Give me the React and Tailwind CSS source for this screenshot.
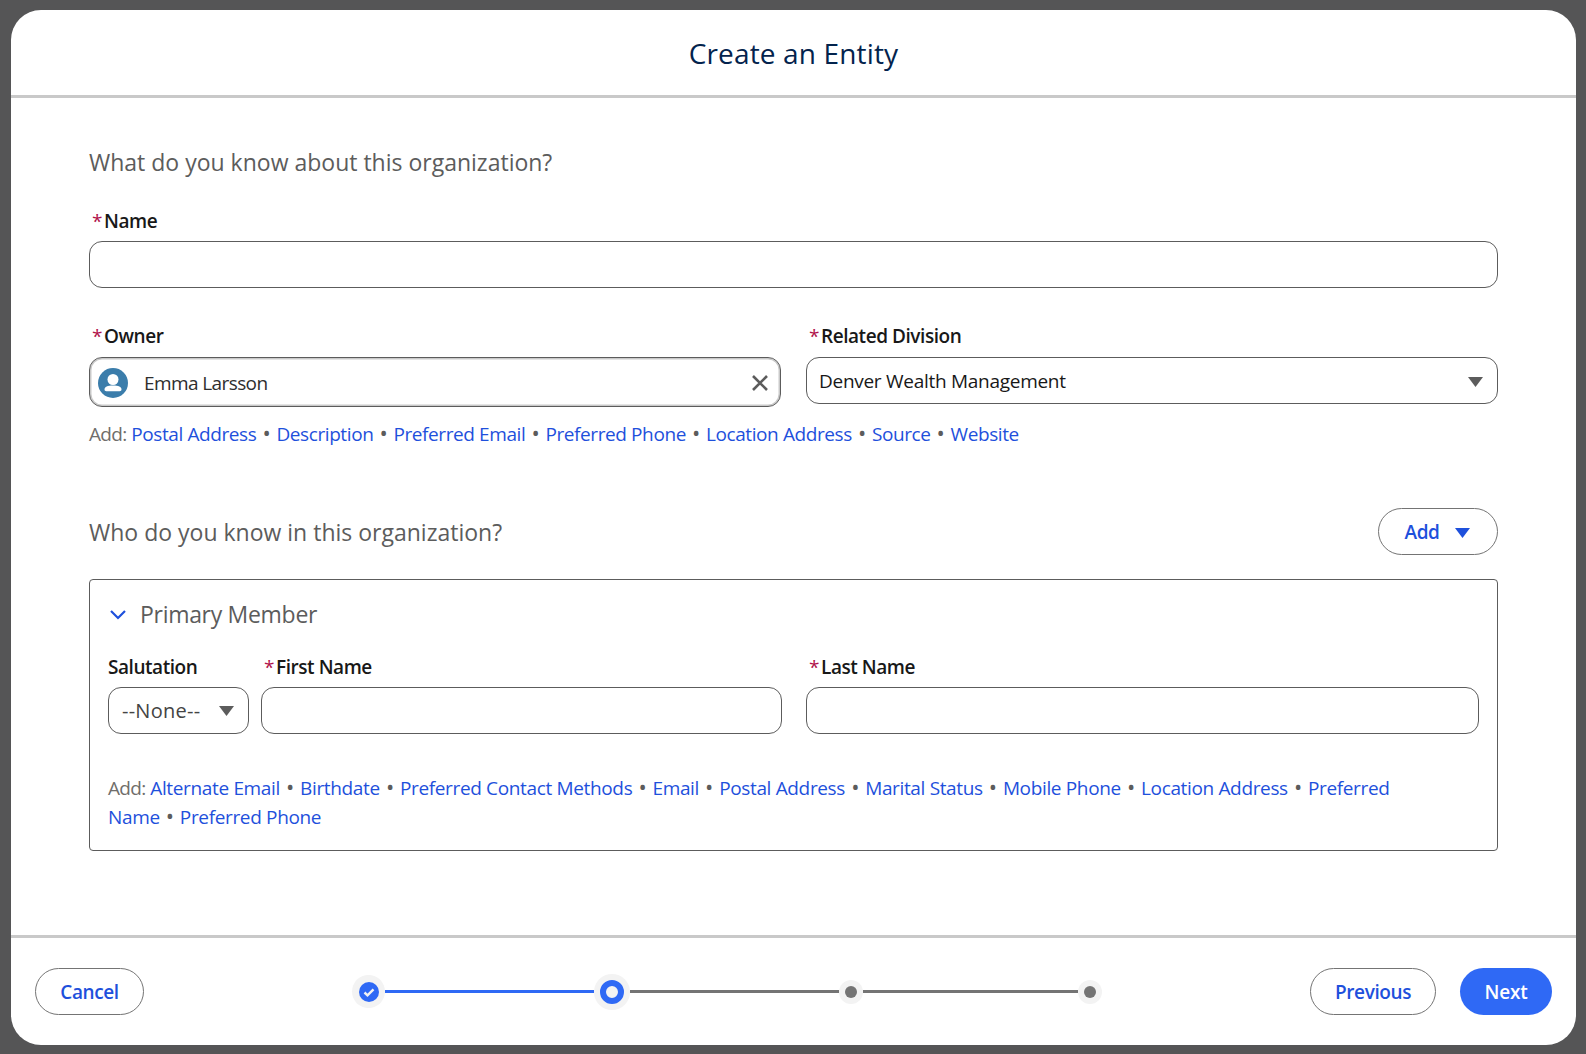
const font = { fontFamily: '"Open Sans", "Noto Sans", sans-serif' };

function Label({ children, required }) {
  return (
    <div className="flex items-center h-[26px] text-[19px] font-semibold text-[#181818] leading-none tracking-[-0.45px]">
      {required && <span className="text-[#b0124a] font-normal ml-[3px] mr-[2px] text-[19px]">*</span>}
      {children}
    </div>
  );
}

function Caret({ color = '#5c5c5c', className = 'mt-[1px]' }) {
  return (
    <svg width="15" height="10" viewBox="0 0 15 10" className={`shrink-0 ${className}`}>
      <path d="M0 0h15L7.500 10z" fill={color} />
    </svg>
  );
}

function AddLinks({ items, className = 'tracking-[-0.4px]' }) {
  return (
    <p className={`text-[19px] leading-[29px] text-[#706e6b] ${className}`}>
      <span className="tracking-[-0.65px]">Add:</span>{' '}
      {items.map((item, i) => (
        <span key={item} className="contents">
          {i > 0 && (
            <>
              {' '}
              <span className="text-[22px] leading-[0] text-[#5c5c5c] mx-[1.5px]">•</span>
              {' '}
            </>
          )}
          {item.split(' ').map((word, j) => (
            <span key={word} className="contents">
              {j > 0 && ' '}
              <a className="text-[#1e50dc]">{word}</a>
            </span>
          ))}
        </span>
      ))}
    </p>
  );
}

function PillButton({ children, className = '' }) {
  return (
    <button className={`h-[47px] rounded-full border border-[#747474] bg-white text-[#1e50dc] text-[19px] font-semibold tracking-[-0.4px] flex items-center justify-center ${className}`}>
      {children}
    </button>
  );
}

const Line = ({ w, color }) => <div className={`h-[3px] ${w} ${color}`} />;

function GrayStep() {
  return (
    <div className="w-[24px] h-[24px] rounded-full bg-[#f3f3f3] flex items-center justify-center shrink-0">
      <div className="w-[12px] h-[12px] rounded-full bg-[#747474]" />
    </div>
  );
}

export default function App() {
  return (
    <div className="h-[1054px] bg-[#555556] pt-[10px] pl-[11px] pr-[10px] pb-[9px]" style={font}>
      <div className="h-full bg-white rounded-[30px] flex flex-col overflow-hidden">
        {/* Header */}
        <header className="h-[88px] shrink-0 border-b-[3px] border-[#c9c9c9] flex items-center justify-center">
          <h1 className="text-[28px] text-[#03234d] tracking-[0.15px] mt-[1px]">Create an Entity</h1>
        </header>

        {/* Body */}
        <main className="flex-1 px-[78px] pt-[48px]">
          <h2 className="text-[23px] leading-[32px] text-[#5c5c5c]">What do you know about this organization?</h2>

          <div className="mt-[30px]">
            <Label required>Name</Label>
            <div className="mt-[7px] h-[47px] rounded-[13px] border border-[#5c5c5c]" />
          </div>

          <div className="mt-[35px] grid grid-cols-2 gap-x-[25px]">
            <div>
              <Label required>Owner</Label>
              <div className="mt-[8px] h-[50px] rounded-[13px] border border-[#5c5c5c] shadow-[inset_0_0_0_1.5px_#c9c9c9] flex items-center pt-[2px] pl-[8px] pr-[11px]">
                <svg width="30" height="30" viewBox="0 0 30 30" className="shrink-0">
                  <circle cx="15" cy="15" r="15" fill="#3b7dab" />
                  <circle cx="15" cy="11.500" r="5.500" fill="#fff" />
                  <path d="M6.500 21.500c0-2.600 3-4 8.500-4s8.500 1.400 8.500 4c0 1-.8 1.700-1.800 1.700H8.300c-1 0-1.800-.7-1.800-1.700z" fill="#fff" />
                </svg>
                <span className="ml-[16px] text-[19px] text-[#2e2e2e] tracking-[-0.6px]">Emma Larsson</span>
                <svg width="18" height="18" viewBox="0 0 18 18" className="ml-auto">
                  <path d="M2 2l14 14M16 2L2 16" stroke="#5c5c5c" strokeWidth="2.600" />
                </svg>
              </div>
            </div>
            <div>
              <Label required>Related Division</Label>
              <div className="mt-[8px] h-[47px] rounded-[13px] border border-[#5c5c5c] flex items-center justify-between pt-[2px] pl-[12px] pr-[14px]">
                <span className="text-[19px] text-[#181818] tracking-[-0.28px]">Denver Wealth Management</span>
                <Caret />
              </div>
            </div>
          </div>

          <div className="mt-[13px]">
            <AddLinks items={['Postal Address', 'Description', 'Preferred Email', 'Preferred Phone', 'Location Address', 'Source', 'Website']} />
          </div>

          <div className="mt-[59px] flex items-center justify-between">
            <h2 className="text-[23px] leading-[32px] text-[#5c5c5c]">Who do you know in this organization?</h2>
            <PillButton className="w-[120px] gap-[15px] pt-[1px] pr-[2px]">
              Add
              <Caret color="#1e50dc" className="mt-[2px]" />
            </PillButton>
          </div>

          <section className="mt-[24px] h-[272px] rounded-[4px] border border-[#5c5c5c] px-[18px]">
            <div className="h-[74px] flex items-center pb-[6px]">
              <svg width="18" height="12" viewBox="0 0 18 12" className="ml-[1px] mt-[2px]">
                <path d="M2 2l7 7 7-7" fill="none" stroke="#1e50dc" strokeWidth="2.200" />
              </svg>
              <span className="ml-[13px] text-[23px] text-[#5c5c5c] tracking-[-0.3px]">Primary Member</span>
            </div>
            <div className="flex">
              <div className="w-[141px] shrink-0">
                <Label>Salutation</Label>
                <div className="mt-[7px] h-[47px] rounded-[13px] border border-[#5c5c5c] flex items-center justify-between pl-[13px] pr-[14px]">
                  <span className="text-[20px] text-[#444] tracking-[0.25px]">--None--</span>
                  <Caret />
                </div>
              </div>
              <div className="w-[521px] ml-[12px] shrink-0">
                <Label required>First Name</Label>
                <div className="mt-[7px] h-[47px] rounded-[13px] border border-[#5c5c5c]" />
              </div>
              <div className="flex-1 ml-[24px]">
                <Label required>Last Name</Label>
                <div className="mt-[7px] h-[47px] rounded-[13px] border border-[#5c5c5c]" />
              </div>
            </div>
            <div className="mt-[40px] pr-[80px]">
              <AddLinks className="tracking-[-0.35px]" items={['Alternate Email', 'Birthdate', 'Preferred Contact Methods', 'Email', 'Postal Address', 'Marital Status', 'Mobile Phone', 'Location Address', 'Preferred Name', 'Preferred Phone']} />
            </div>
          </section>
        </main>

        {/* Footer */}
        <footer className="h-[110px] shrink-0 border-t-[3px] border-[#c9c9c9] flex items-center pl-[24px] pr-[24px]">
          <PillButton className="w-[109px] pt-[2px]">Cancel</PillButton>
          <div className="ml-[208px] flex items-center">
            <div className="w-[33px] h-[33px] rounded-full bg-[#f3f3f3] flex items-center justify-center shrink-0">
              <svg width="20" height="20" viewBox="0 0 20 20">
                <circle cx="10" cy="10" r="10" fill="#2f69f5" />
                <path d="M5.500 10.500l3 2.800 6-6" fill="none" stroke="#f3f3f3" strokeWidth="2.400" />
              </svg>
            </div>
            <Line w="w-[209px]" color="bg-[#2f69f5]" />
            <div className="w-[36px] h-[36px] rounded-full bg-[#f3f3f3] flex items-center justify-center shrink-0">
              <div className="w-[24px] h-[24px] rounded-full border-[6px] border-[#2f69f5] bg-[#f3f3f3]" />
            </div>
            <Line w="w-[209px]" color="bg-[#747474]" />
            <GrayStep />
            <Line w="w-[215px]" color="bg-[#747474]" />
            <GrayStep />
          </div>
          <div className="ml-auto flex items-center gap-[24px]">
            <PillButton className="w-[126px] pt-[2px]">Previous</PillButton>
            <button className="w-[92px] h-[47px] rounded-full bg-[#2f69f5] text-white text-[19px] font-semibold tracking-[-0.2px] pt-[2px]">Next</button>
          </div>
        </footer>
      </div>
    </div>
  );
}
